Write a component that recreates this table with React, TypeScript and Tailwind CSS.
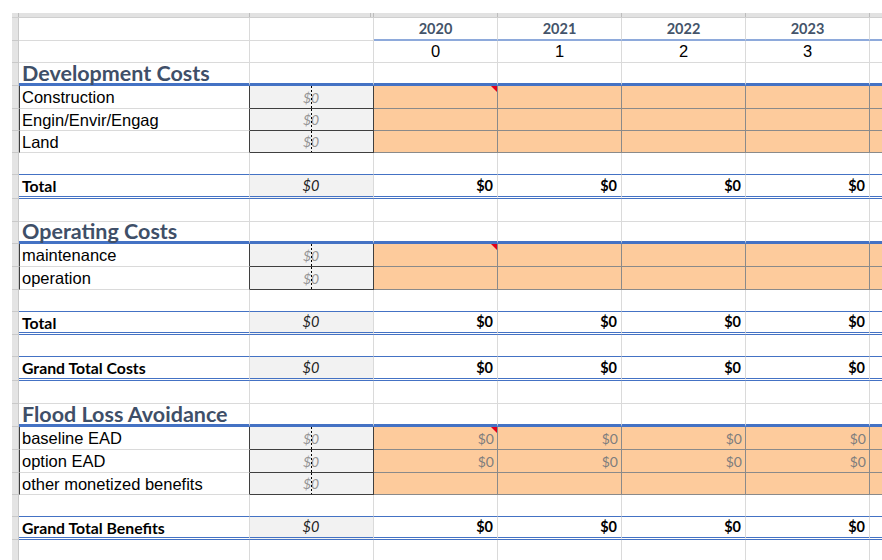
import React from "react";

type Kind = "years" | "nums" | "heading" | "input" | "blank" | "total";
type Bottom = "grid" | "blue" | "double";

interface Row {
    kind: Kind;
    h: string;
    label?: string;
    bottom?: Bottom;
    flag?: boolean;
    values?: boolean;
}

const YEARS = ["2020", "2021", "2022", "2023"];

const ROWS: Row[] = [
    { kind: "years", h: "h-[23px]" },
    { kind: "nums", h: "h-[22px]" },
    { kind: "heading", h: "h-[23px]", label: "Development Costs" },
    { kind: "input", h: "h-[23px]", label: "Construction", flag: true },
    { kind: "input", h: "h-[22px]", label: "Engin/Envir/Engag" },
    { kind: "input", h: "h-[22px]", label: "Land" },
    { kind: "blank", h: "h-[22px]", bottom: "blue" },
    { kind: "total", h: "h-[24px]", label: "Total" },
    { kind: "blank", h: "h-[23px]" },
    { kind: "heading", h: "h-[22px]", label: "Operating Costs" },
    { kind: "input", h: "h-[23px]", label: "maintenance", flag: true },
    { kind: "input", h: "h-[23px]", label: "operation" },
    { kind: "blank", h: "h-[22px]", bottom: "blue" },
    { kind: "total", h: "h-[23px]", label: "Total" },
    { kind: "blank", h: "h-[22px]", bottom: "blue" },
    { kind: "total", h: "h-[24px]", label: "Grand Total Costs" },
    { kind: "blank", h: "h-[23px]" },
    { kind: "heading", h: "h-[23px]", label: "Flood Loss Avoidance" },
    { kind: "input", h: "h-[23px]", label: "baseline EAD", flag: true, values: true },
    { kind: "input", h: "h-[23px]", label: "option EAD", values: true },
    { kind: "input", h: "h-[22px]", label: "other monetized benefits" },
    { kind: "blank", h: "h-[22px]", bottom: "blue" },
    { kind: "total", h: "h-[23px]", label: "Grand Total Benefits" },
    { kind: "blank", h: "h-[23px]" },
];

const ARIAL = "[font-family:'Liberation_Sans',Arial,sans-serif]";
const CAL = "[font-family:Lato,'Liberation_Sans',sans-serif]";

function bottomCls(b: Bottom) {
    if (b === "blue") return "border-b border-b-[#4472c4]";
    if (b === "double") return "border-b-[3px] border-double border-b-[#4472c4]";
    return "border-b border-b-[#dadada]";
}

function DashLine() {
    return <div className="absolute left-[61px] top-0 bottom-0 w-px bg-[repeating-linear-gradient(to_bottom,#000_0_2px,transparent_2px_4px)]" />;
}

function SheetRow({ r }: { r: Row }) {
    const grid = "border-r border-r-[#dadada]";
    let a: React.ReactNode, b: React.ReactNode, yrs: React.ReactNode[], last: React.ReactNode;

    if (r.kind === "years" || r.kind === "nums") {
        const yb = r.kind === "years" ? "border-b-2 border-b-[#8eaadb]" : "border-b border-b-[#dadada]";
        a = <div className={`w-[231px] shrink-0 ${grid} border-b border-b-[#dadada]`} />;
        b = <div className={`w-[124px] shrink-0 ${grid} border-b border-b-[#dadada]`} />;
        yrs = YEARS.map((y, i) => (
            <div key={i} className={`w-[124px] shrink-0 ${grid} ${yb} flex items-center justify-center`}>
                {r.kind === "years"
                    ? <span className={`${CAL} font-bold text-[14.5px] text-[#44546a] leading-none pt-[2px]`}>{y}</span>
                    : <span className={`${ARIAL} text-[16.5px] text-black leading-none`}>{i}</span>}
            </div>
        ));
        last = <div className={`flex-1 ${yb}`} />;
    } else if (r.kind === "heading") {
        const hb = "border-b-[3px] border-b-[#4472c4]";
        a = (
            <div className={`w-[231px] shrink-0 ${grid} ${hb} flex items-end pl-[3px]`}>
                <span className={`${CAL} font-bold text-[21.5px] text-[#3f4f68] leading-none mb-[-1px]`}>{r.label}</span>
            </div>
        );
        b = <div className={`w-[124px] shrink-0 ${grid} ${hb}`} />;
        yrs = YEARS.map((_, i) => <div key={i} className={`w-[124px] shrink-0 ${grid} ${hb}`} />);
        last = <div className={`flex-1 ${hb}`} />;
    } else if (r.kind === "input") {
        a = (
            <div className="w-[231px] shrink-0 border-l border-l-[#3f3f3f] border-r border-r-[#3f3f3f] border-b border-b-[#dadada] flex items-center pl-[2px]">
                <span className={`${ARIAL} text-[16.5px] text-black leading-none pt-[1px]`}>{r.label}</span>
            </div>
        );
        b = (
            <div className="relative w-[124px] shrink-0 bg-[#f2f2f2] border-r border-b border-[#3f3f3f] flex items-center justify-center">
                <span className={`${CAL} italic text-[14px] text-[#959595] leading-none pt-[1px] pr-[1px]`}>$0</span>
                <DashLine />
            </div>
        );
        yrs = YEARS.map((_, i) => (
            <div key={i} className="relative w-[124px] shrink-0 bg-[#fdcb9c] border-r border-b border-[#8a8a8a] flex items-center justify-end pr-[3px]">
                {r.values && <span className={`${CAL} text-[14px] text-[#7d7d7d] leading-none pt-[1px]`}>$0</span>}
                {r.flag && i === 0 && (
                    <div className="absolute top-0 right-0 w-0 h-0 border-l-[6px] border-l-transparent border-t-[6px] border-t-[#e3001b]" />
                )}
            </div>
        ));
        last = <div className="flex-1 bg-[#fdcb9c] border-b border-[#8a8a8a]" />;
    } else if (r.kind === "total") {
        const db = bottomCls("double");
        a = (
            <div className={`w-[231px] shrink-0 ${grid} ${db} flex items-center pl-[3px]`}>
                <span className={`${CAL} font-bold text-[15.8px] text-black leading-none pt-[1px]`}>{r.label}</span>
            </div>
        );
        b = (
            <div className={`w-[124px] shrink-0 bg-[#f2f2f2] ${grid} ${db} flex items-center justify-center`}>
                <span className={`${CAL} italic text-[14.5px] text-[#222] leading-none pt-[1px] pr-[1px]`}>$0</span>
            </div>
        );
        yrs = YEARS.map((_, i) => (
            <div key={i} className={`w-[124px] shrink-0 ${grid} ${db} flex items-center justify-end pr-[4px]`}>
                <span className={`${CAL} font-bold text-[14.5px] text-black leading-none pt-[1px]`}>$0</span>
            </div>
        ));
        last = <div className={`flex-1 ${db}`} />;
    } else {
        const bb = bottomCls(r.bottom ?? "grid");
        a = <div className={`w-[231px] shrink-0 ${grid} ${bb}`} />;
        b = <div className={`w-[124px] shrink-0 ${grid} ${bb}`} />;
        yrs = YEARS.map((_, i) => <div key={i} className={`w-[124px] shrink-0 ${grid} ${bb}`} />);
        last = <div className={`flex-1 ${bb}`} />;
    }

    return (
        <div className={`flex ${r.h}`}>
            <div className="w-[7px] shrink-0 bg-[#e4e4e4] border-b border-r border-[#c9c9c9]" />
            {a}
            {b}
            {yrs}
            {last}
        </div>
    );
}

export default function App() {
    return (
        <div className="w-[882px] h-[560px] overflow-hidden bg-white pl-[12px] pt-[13px]">
            {/* column header strip */}
            <div className="flex h-[5px] bg-[#e2e2e2] border-b border-[#cfcfcf]">
                <div className="w-[7px] shrink-0 border-r border-[#bdbdbd]" />
                <div className="w-[231px] shrink-0 border-r border-[#bdbdbd]" />
                <div className="w-[121px] shrink-0 border-r border-[#bdbdbd]" />
                <div className="w-[3px] shrink-0 border-r border-[#bdbdbd]" />
                <div className="w-[124px] shrink-0 border-r border-[#bdbdbd]" />
                <div className="w-[124px] shrink-0 border-r border-[#bdbdbd]" />
                <div className="w-[124px] shrink-0 border-r border-[#bdbdbd]" />
                <div className="w-[124px] shrink-0 border-r border-[#bdbdbd]" />
                <div className="flex-1" />
            </div>
            {ROWS.map((r, i) => <SheetRow key={i} r={r} />)}
        </div>
    );
}
